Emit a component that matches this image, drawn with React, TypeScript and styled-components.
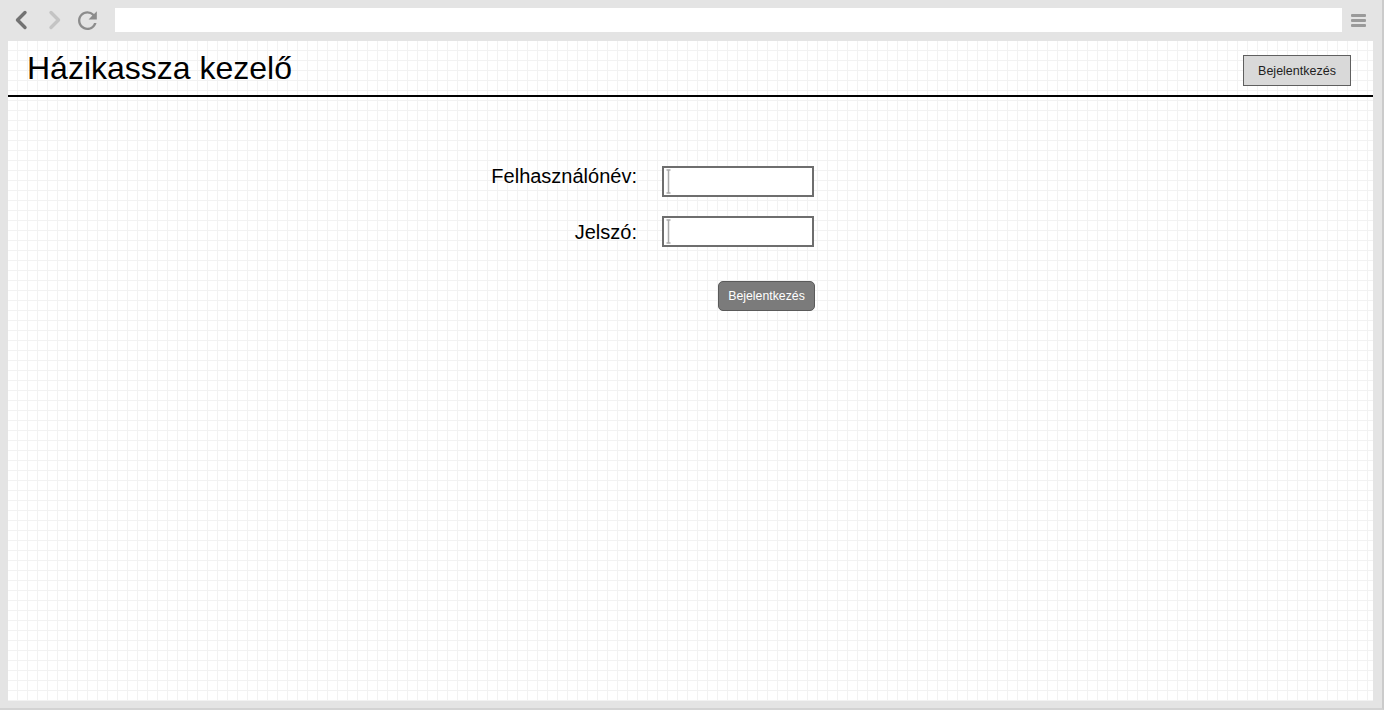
import React from "react";
import styled, { createGlobalStyle } from "styled-components";

const Global = createGlobalStyle`
  html, body { margin: 0; padding: 0; }
  body {
    background: #e4e4e4;
    font-family: "Liberation Sans", Arial, sans-serif;
  }
`;

const Window = styled.div`
  width: 1384px;
  height: 710px;
  box-sizing: border-box;
  display: flex;
  flex-direction: column;
  background: #e4e4e4;
  border-right: 2px solid #cbcbcb;
  border-bottom: 2px solid #d3d3d3;
  overflow: hidden;
`;

const Toolbar = styled.div`
  height: 41px;
  flex: none;
  box-sizing: border-box;
  display: flex;
  align-items: center;
  padding: 8px 16px 9px 0;
`;

const NavIcon = styled.span<{ $ml: number }>`
  display: flex;
  align-items: center;
  margin-left: ${(p) => p.$ml}px;
  flex: none;
`;

const UrlBar = styled.div`
  flex: 1;
  height: 24px;
  background: #ffffff;
  margin-left: 16px;
  margin-right: 9px;
`;

const Hamburger = styled.div`
  width: 15px;
  display: flex;
  flex-direction: column;
  gap: 2px;
  flex: none;
`;

const Bar = styled.span`
  display: block;
  height: 3px;
  border-radius: 1px;
  background: #9a9a9a;
`;

const Content = styled.div`
  flex: 1;
  margin: 0 9px 7px 8px;
  background-color: #ffffff;
  background-image: linear-gradient(
      to right,
      transparent 9px,
      #f2f2f2 9px
    ),
    linear-gradient(to bottom, transparent 9px, #f2f2f2 9px);
  background-size: 10px 10px;
  display: flex;
  flex-direction: column;
`;

const Header = styled.header`
  height: 54px;
  border-bottom: 2px solid #000;
  display: flex;
  justify-content: space-between;
  align-items: center;
  padding: 0 22px 0 19px;
`;

const Title = styled.h1`
  margin: 0;
  font-size: 32px;
  line-height: 37px;
  font-weight: normal;
  color: #000;
`;

const HeaderButton = styled.button`
  align-self: flex-start;
  margin-top: 14px;
  width: 108px;
  height: 31px;
  box-sizing: border-box;
  background: #d9d9d9;
  border: 1px solid #5f5f5f;
  border-radius: 0;
  font-family: "Liberation Sans", Arial, sans-serif;
  font-size: 12.5px;
  color: #1e1e1e;
  padding: 0;
`;

const Form = styled.form`
  display: grid;
  grid-template-columns: 200px 152px;
  column-gap: 25px;
  row-gap: 19px;
  margin: 69px 0 0 429px;
  align-items: start;
`;

const Label = styled.label<{ $shift: number }>`
  text-align: right;
  font-size: 20px;
  line-height: 23px;
  color: #000;
  margin-top: ${(p) => p.$shift}px;
`;

const Field = styled.div`
  height: 31px;
  box-sizing: border-box;
  border: 2px solid #6e6e6e;
  background: #ffffff;
  display: flex;
  align-items: center;
  padding-left: 2px;
`;

const SubmitButton = styled.button`
  grid-column: 2;
  justify-self: end;
  margin-top: 15px;
  margin-right: -1px;
  width: 97px;
  height: 30px;
  box-sizing: border-box;
  background: #7b7b7b;
  border: 1px solid #5a5a5a;
  border-radius: 5px;
  color: #ffffff;
  font-family: "Liberation Sans", Arial, sans-serif;
  font-weight: normal;
  font-size: 12.3px;
  padding: 0;
`;

const IBeam = () => (
  <svg width="5" height="25" viewBox="0 0 5 25">
    <path
      d="M0.5 1 H4.5 M2.5 1 V24 M0.5 24 H4.5"
      stroke="#a9a9a9"
      strokeWidth="1.5"
      fill="none"
    />
  </svg>
);

export default function App() {
  return (
    <>
      <Global />
      <Window>
        <Toolbar>
          <NavIcon $ml={14}>
            <svg width="14" height="20" viewBox="0 0 14 20">
              <path
                d="M11 2.5 L3.5 10 L11 17.5"
                stroke="#727272"
                strokeWidth="3.4"
                fill="none"
                strokeLinecap="round"
                strokeLinejoin="round"
              />
            </svg>
          </NavIcon>
          <NavIcon $ml={20}>
            <svg width="14" height="20" viewBox="0 0 14 20">
              <path
                d="M3 2.5 L10.5 10 L3 17.5"
                stroke="#c4c4c4"
                strokeWidth="3.4"
                fill="none"
                strokeLinecap="round"
                strokeLinejoin="round"
              />
            </svg>
          </NavIcon>
          <NavIcon $ml={15}>
            <svg width="22" height="20" viewBox="3.5 3 18 17">
              <path
                d="M17.65 6.35A7.958 7.958 0 0012 4c-4.42 0-7.99 3.58-7.99 8s3.57 8 7.99 8c3.73 0 6.84-2.55 7.73-6h-2.08A5.99 5.99 0 0112 18c-3.31 0-6-2.69-6-6s2.69-6 6-6c1.66 0 3.14.69 4.22 1.78L13 11h7V4l-2.35 2.35z"
                fill="#8c8c8c"
              />
            </svg>
          </NavIcon>
          <UrlBar />
          <Hamburger>
            <Bar />
            <Bar />
            <Bar />
          </Hamburger>
        </Toolbar>
        <Content>
          <Header>
            <Title>Házikassza kezelő</Title>
            <HeaderButton type="button">Bejelentkezés</HeaderButton>
          </Header>
          <Form onSubmit={(e) => e.preventDefault()}>
            <Label $shift={-1}>Felhasználónév:</Label>
            <Field>
              <IBeam />
            </Field>
            <Label $shift={5}>Jelszó:</Label>
            <Field>
              <IBeam />
            </Field>
            <SubmitButton type="submit">Bejelentkezés</SubmitButton>
          </Form>
        </Content>
      </Window>
    </>
  );
}
